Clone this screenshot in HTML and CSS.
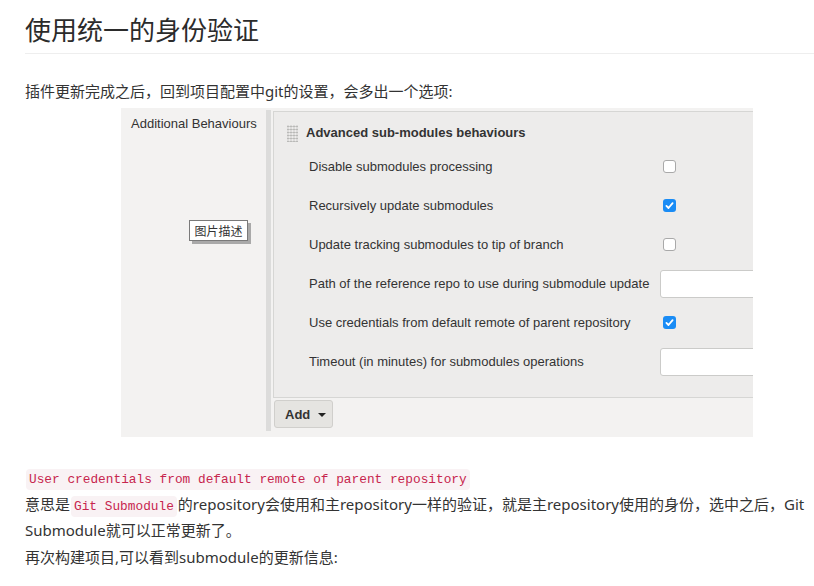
FILE: index.html
```html
<!DOCTYPE html>
<html lang="zh-CN">
<head>
<meta charset="utf-8">
<title>使用统一的身份验证</title>
<link rel="stylesheet" href="styles.css">
</head>
<body>
<div class="page">
  <h1 class="title">使用统一的身份验证</h1>
  <p class="intro">插件更新完成之后，回到项目配置中git的设置，会多出一个选项:</p>
  <div class="shot">
    <div class="side">Additional Behaviours</div>
    <div class="bar"></div>
    <div class="main">
      <div class="panel">
        <div class="panel-head"><span class="grip"></span><span class="head-text">Advanced sub-modules behaviours</span></div>
        <div class="row"><span class="label">Disable submodules processing</span><span class="ctl"><span class="cb"></span></span></div>
        <div class="row"><span class="label">Recursively update submodules</span><span class="ctl"><span class="cb checked"><svg viewBox="0 0 13 13" width="13" height="13"><path d="M3.4 6.9 L5.5 9 L9.6 4.2" fill="none" stroke="#fff" stroke-width="1.8" stroke-linecap="round" stroke-linejoin="round"/></svg></span></span></div>
        <div class="row"><span class="label">Update tracking submodules to tip of branch</span><span class="ctl"><span class="cb"></span></span></div>
        <div class="row"><span class="label">Path of the reference repo to use during submodule update</span><span class="ctl"><span class="input"></span></span></div>
        <div class="row"><span class="label">Use credentials from default remote of parent repository</span><span class="ctl"><span class="cb checked"><svg viewBox="0 0 13 13" width="13" height="13"><path d="M3.4 6.9 L5.5 9 L9.6 4.2" fill="none" stroke="#fff" stroke-width="1.8" stroke-linecap="round" stroke-linejoin="round"/></svg></span></span></div>
        <div class="row"><span class="label">Timeout (in minutes) for submodules operations</span><span class="ctl"><span class="input"></span></span></div>
      </div>
      <button class="add">Add<span class="caret"></span></button>
    </div>
    <div class="tip">图片描述</div>
  </div>
  <p class="body"><code class="code">User credentials from default remote of parent repository</code><br>意思是<code class="code">Git Submodule</code>的repository会使用和主repository一样的验证，就是主repository使用的身份，选中之后，Git Submodule就可以正常更新了。<br>再次构建项目,可以看到submodule的更新信息:</p>
</div>
</body>
</html>
```
FILE: styles.css
```css
html, body {
  margin: 0;
  padding: 0;
  background: #fff;
}
.page {
  padding-left: 25px;
  color: #333;
  font-family: "Noto Sans", "Noto Sans CJK SC", sans-serif;
  font-size: 15px;
}
.title {
  margin: 0;
  padding: 12px 0 5px;
  font-size: 26px;
  line-height: 36px;
  font-weight: normal;
  color: #2b2b2b;
  border-bottom: 1px solid #eee;
}
.intro {
  margin: 24px 0 0;
  line-height: 26px;
}
.shot {
  position: relative;
  margin: 4px 0 0 96px;
  width: 632px;
  height: 329px;
  overflow: hidden;
  display: flex;
  background: #f3f2f1;
  font-family: "Liberation Sans", Arial, sans-serif;
  font-size: 13px;
  color: #333;
}
.side {
  flex: 0 0 145px;
  box-sizing: border-box;
  padding: 8px 0 0 10px;
  line-height: 15px;
}
.bar {
  flex: 0 0 5px;
  margin: 2px 0 6px;
  background: #dcdcdb;
}
.main {
  flex: 1;
  min-width: 0;
  margin-left: 2px;
  padding-top: 3px;
}
.panel {
  width: 520px;
  background: #edeceb;
  border-top: 1px solid #d6d6d4;
  border-left: 1px solid #d6d6d4;
  border-bottom: 1px solid #d6d6d4;
  padding-bottom: 16px;
}
.panel-head {
  display: flex;
  align-items: center;
  height: 20px;
  padding-top: 11px;
  margin-bottom: 4px;
}
.grip {
  width: 11px;
  height: 17px;
  margin-left: 13px;
  margin-right: 8px;
  background-image: radial-gradient(circle, #a9a9a7 0.8px, transparent 1.2px);
  background-size: 3px 3px;
  background-position: -0.5px 0;
}
.head-text {
  font-weight: bold;
  line-height: 20px;
}
.row {
  display: flex;
  align-items: center;
  height: 39px;
}
.label {
  flex: 0 0 386px;
  box-sizing: border-box;
  padding-left: 35px;
  line-height: 16px;
}
.ctl {
  flex: 1;
  display: flex;
  align-items: center;
}
.cb {
  box-sizing: border-box;
  width: 13px;
  height: 13px;
  margin-left: 3px;
  border: 1px solid #a9a9a9;
  border-radius: 3px;
  background: #fff;
}
.cb.checked {
  border: none;
  background: #1a8cf5;
  display: flex;
}
.input {
  box-sizing: border-box;
  width: 200px;
  height: 28px;
  border: 1px solid #cbcbc9;
  border-radius: 3px;
  background: #fff;
}
.add {
  display: flex;
  align-items: center;
  box-sizing: border-box;
  width: 59px;
  height: 28px;
  margin: 2px 0 0 1px;
  padding: 0 0 0 10px;
  border: 1px solid #d0cfcc;
  border-radius: 3px;
  background: #e5e4e1;
  font-family: "Liberation Sans", Arial, sans-serif;
  font-size: 13px;
  font-weight: bold;
  color: #333;
}
.caret {
  width: 0;
  height: 0;
  margin-left: 8px;
  margin-top: 1px;
  border-left: 4px solid transparent;
  border-right: 4px solid transparent;
  border-top: 4px solid #222;
}
.tip {
  position: absolute;
  left: 68px;
  top: 112px;
  box-sizing: border-box;
  width: 59px;
  height: 21px;
  border: 1px solid #7a7a7a;
  background: #fff;
  box-shadow: 3px 3px 0 #a9a9a9;
  font-family: "Noto Sans CJK SC", sans-serif;
  font-size: 12px;
  line-height: 19px;
  text-align: center;
  color: #333;
}
.body {
  margin: 27px 0 0;
  line-height: 26.5px;
}
.code {
  font-family: "Liberation Mono", "DejaVu Sans Mono", monospace;
  font-size: 12.8px;
  line-height: 1;
  color: #c7254e;
  background: #f9f2f4;
  border-radius: 4px;
  padding: 3px 3px;
  margin: 0 1px;
}
```
